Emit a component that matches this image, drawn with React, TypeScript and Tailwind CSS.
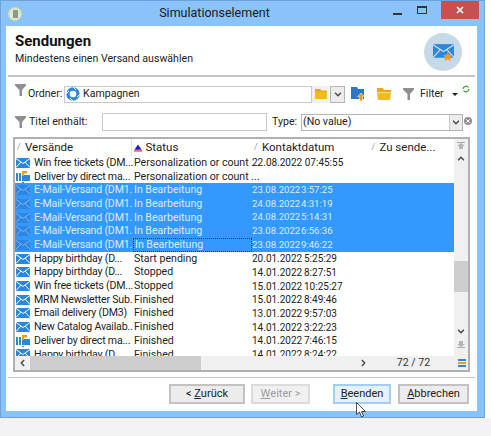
const font = "font-['Roboto',sans-serif]";

function Funnel({ className = "" }: { className?: string }) {
  return (
    <svg viewBox="0 0 11 12" className={"w-[11px] h-[12px] shrink-0 " + className}>
      <path d="M0 0H11V1.5L7 6V12H4.5V6L0 1.5Z" fill="#8f8f8f" />
    </svg>
  );
}

function Mail({ dim = false }: { dim?: boolean }) {
  return (
    <svg viewBox="0 0 14 10" className="w-[14px] h-[10px] shrink-0">
      <rect width="14" height="10" fill={dim ? "#2f86e0" : "#2b86dc"} />
      <path d="M0 0.5L7 5.5L14 0.5M0 9.5L4.8 4.2M14 9.5L9.2 4.2" stroke={dim ? "#76b5f5" : "#ffffff"} strokeWidth="1" fill="none" />
    </svg>
  );
}

function DirectMail() {
  return (
    <svg viewBox="0 0 14 13" className="w-[14px] h-[13px] shrink-0">
      <rect x="0" y="3" width="2" height="8" fill="#2b86dc" />
      <rect x="3" y="3" width="2" height="8" fill="#2b86dc" />
      <rect x="6" y="5" width="8" height="6" fill="#2b86dc" />
      <path d="M6 1H11V3.5H8V6H6Z" fill="#f39a1e" />
      <rect x="6" y="12" width="2" height="1" fill="#2b86dc" />
    </svg>
  );
}

function FolderYellow({ open = false }: { open?: boolean }) {
  return (
    <svg viewBox="0 0 14 12" className="w-[14px] h-[12px] shrink-0">
      <path d="M0 0H6L7 2H14V4H0Z" fill={open ? "#e9a917" : "#e5a914"} />
      <path d={open ? "M0 4.5H14L13 12H1Z" : "M0 3H14V12H0Z"} fill="#f3bb15" />
    </svg>
  );
}

function Chevron({ up = false }: { up?: boolean }) {
  return (
    <svg viewBox="0 0 9 6" className="w-[8px] h-[5px] shrink-0">
      <path d={up ? "M1 5L4.5 1.5L8 5" : "M1 1L4.5 4.5L8 1"} stroke="#444" strokeWidth="1.6" fill="none" />
    </svg>
  );
}

function DoubleArrow({ down = false }: { down?: boolean }) {
  return (
    <svg viewBox="0 0 8 7" className={"w-[8px] h-[7px] " + (down ? "rotate-180" : "")}>
      <rect width="8" height="1" fill="#a8a8a8" />
      <path d="M4 1L8 4H6V7H2V4H0Z" fill="#b4b4b4" />
    </svg>
  );
}

type Row = { icon: "mail" | "direct"; name: string; status: string; date?: string; time?: string; sel?: boolean; focus?: boolean };

const rows: Row[] = [
  { icon: "mail", name: "Win free tickets (DM...", status: "Personalization or count ...", date: "22.08.2022 07:45:55" },
  { icon: "direct", name: "Deliver by direct ma...", status: "Personalization or count ..." },
  { icon: "mail", name: "E-Mail-Versand (DM1.", status: "In Bearbeitung", date: "23.08.2022", time: "3:57:25", sel: true },
  { icon: "mail", name: "E-Mail-Versand (DM1.", status: "In Bearbeitung", date: "24.08.2022", time: "4:31:19", sel: true },
  { icon: "mail", name: "E-Mail-Versand (DM1.", status: "In Bearbeitung", date: "24.08.2022", time: "5:14:31", sel: true },
  { icon: "mail", name: "E-Mail-Versand (DM1.", status: "In Bearbeitung", date: "23.08.2022", time: "6:56:36", sel: true },
  { icon: "mail", name: "E-Mail-Versand (DM1.", status: "In Bearbeitung", date: "23.08.2022", time: "9:46:22", sel: true, focus: true },
  { icon: "mail", name: "Happy birthday (D...", status: "Start pending", date: "20.01.2022", time: "5:25:29" },
  { icon: "mail", name: "Happy birthday (D...", status: "Stopped", date: "14.01.2022", time: "8:27:51" },
  { icon: "mail", name: "Win free tickets (DM...", status: "Stopped", date: "15.01.2022", time: "10:25:27" },
  { icon: "mail", name: "MRM Newsletter Sub...", status: "Finished", date: "15.01.2022", time: "8:49:46" },
  { icon: "mail", name: "Email delivery (DM3)", status: "Finished", date: "13.01.2022", time: "9:57:03" },
  { icon: "mail", name: "New Catalog Availab...", status: "Finished", date: "14.01.2022", time: "3:22:23" },
  { icon: "direct", name: "Deliver by direct ma...", status: "Finished", date: "14.01.2022", time: "7:46:15" },
  { icon: "mail", name: "Happy birthday (D...", status: "Finished", date: "14.01.2022", time: "8:24:22" },
];

function TableRow({ row }: { row: Row }) {
  return (
    <div className={"flex items-center h-[13.7px] shrink-0 whitespace-nowrap " + (row.sel ? "bg-[#3399ff] text-[#dcecff]" : "text-[#222]")}>
      <div className="w-[118px] shrink-0 flex items-center gap-[4px] pl-[1px] overflow-hidden">
        {row.icon === "mail" ? <Mail dim={row.sel} /> : <DirectMail />}
        <span className="tracking-[-0.2px]">{row.name}</span>
      </div>
      <div className={"w-[119px] shrink-0 pl-[1px] " + (row.focus ? "border border-dotted border-[#333] h-[13.7px] leading-[11px] pl-[0px]" : "")}>{row.status}</div>
      <div className={"flex-1 flex " + (row.sel ? "text-[9.6px]" : "text-[10px]")}>
        <span className={row.time ? (row.sel ? "w-[49px]" : "w-[52px]") : ""}>{row.date}</span>
        <span>{row.time}</span>
      </div>
    </div>
  );
}

function HeaderCell({ w, label, sort }: { w: string; label: string; sort?: boolean }) {
  return (
    <div className={"flex items-center h-full " + w}>
      {sort ? (
        <svg viewBox="0 0 9 8" className="w-[8px] h-[8px] ml-[2px] mr-[3px]">
          <path d="M4.5 0L8.5 6H0.5Z" fill="#1a1ac8" />
          <rect y="6.5" width="9" height="1.5" fill="#e04040" />
        </svg>
      ) : (
        <span className="text-[#999] text-[9px] w-[10px] pl-[2px]">/</span>
      )}
      <span className="text-[11.5px]">{label}</span>
    </div>
  );
}

function Button({ label, u, rest, w, state }: { label?: string; u: string; rest: string; w: string; state?: "hot" | "off" }) {
  const look =
    state === "hot"
      ? "bg-[#e5f1fb] border-[#a3cdf2] text-[#222]"
      : state === "off"
        ? "bg-[#f0f0f0] border-[#dcdcdc] text-[#9c9c9c]"
        : "bg-[#ececec] border-[#c2c2c2] text-[#222]";
  return (
    <button className={"h-[20px] border-2 flex items-center justify-center text-[11px] whitespace-pre " + w + " " + look}>
      {label}
      <span className="underline">{u}</span>
      {rest}
    </button>
  );
}

export default function App() {
  return (
    <div className={"w-[491px] h-[436px] bg-white text-[10.6px] text-[#222] overflow-hidden " + font}>
      <div className="w-[485px] h-[418px] bg-[#8ac3f9] border border-[#6da3d8] flex flex-col relative">
        {/* title bar */}
        <div className="h-[25px] flex items-center shrink-0">
          <div className="w-[14px] h-[14px] rounded-full bg-[#dfe8c8] border border-[#c8d8a8] ml-[7px] flex items-center justify-center">
            <div className="w-[5px] h-[8px] bg-[#8a9a8a]" />
          </div>
          <div className="flex-1 text-center text-[12.5px] text-[#1a1a1a] pl-[14px]">Simulationselement</div>
          <div className="w-[9px] h-[2px] bg-[#333] mr-[15px] mt-[1px]" />
          <div className="w-[10px] h-[8px] border border-t-2 border-[#333] mr-[14px] -mt-[7px]" />
          <div className="w-[38px] h-[18px] bg-[#c75050] flex items-center justify-center self-start mr-[5px]">
            <svg viewBox="0 0 8 8" className="w-[8px] h-[8px]">
              <path d="M1 1L7 7M7 1L1 7" stroke="#fff" strokeWidth="1.6" />
            </svg>
          </div>
        </div>

        {/* client area */}
        <div className="mx-[5px] w-[471px] h-[385px] bg-white flex flex-col shrink-0">
          <div className="h-[49px] shrink-0 mx-[2px] border-b-2 border-[#c4c4c4] flex justify-between pl-[7px] pr-[13px] box-content">
            <div className="pt-[6px]">
              <div className="text-[15px] font-bold leading-[18px] text-[#111]">Sendungen</div>
              <div className="text-[10.6px] leading-[16px] mt-[1px]">Mindestens einen Versand auswählen</div>
            </div>
            <div className="w-[38px] h-[38px] rounded-full bg-[#c5d9e8] flex items-center justify-center mt-[7px]">
              <svg viewBox="0 0 20 16" className="w-[21px] h-[17px]">
                <rect x="0" y="0" width="20" height="13" fill="#2b86dc" />
                <path d="M0 0.5L10 7L20 0.5M0 13L7 5M20 13L13 5" stroke="#c5d9e8" strokeWidth="1.2" fill="none" />
                <path d="M14 7.5L15.4 10.3L18.5 10.7L16.2 12.8L16.8 16L14 14.4L11.2 16L11.8 12.8L9.5 10.7L12.6 10.3Z" fill="#f39a1e" />
              </svg>
            </div>
          </div>

          {/* folder row */}
          <div className="flex items-center h-[18px] mt-[8px] ml-[9px] shrink-0">
            <Funnel className="-mt-[8px]" />
            <span className="w-[37px] ml-[1px] pl-[1px] shrink-0">Ordner:</span>
            <div className="w-[248px] h-[17px] border border-[#c8c8c8] flex items-center pl-[1px] shrink-0">
              <svg viewBox="0 0 14 14" className="w-[14px] h-[14px]">
                <circle cx="7" cy="7" r="5" fill="none" stroke="#2b86dc" strokeWidth="3.4" />
                <path d="M7 0L10 3M7 14L4 11M0 7L3 4M14 7L11 10" stroke="#fff" strokeWidth="1" />
              </svg>
              <span className="ml-[3px]">Kampagnen</span>
            </div>
            <div className="w-[17px] h-[17px] bg-[#f1f1f1] flex items-center justify-center shrink-0">
              <div className="scale-[0.85]"><FolderYellow /></div>
            </div>
            <div className="w-[15px] h-[17px] ml-[1px] bg-[#ececec] border border-[#b4b4b4] flex items-center justify-center shrink-0"><Chevron /></div>
            <svg viewBox="0 0 14 14" className="w-[14px] h-[14px] ml-[6px] shrink-0">
              <path d="M0 0H6L7 2H13V12H0Z" fill="#2b76c8" />
              <path d="M10 6L13.5 9.5H11.5V14H8.5V9.5H6.5Z" fill="#f39a1e" stroke="#fff" strokeWidth="0.5" />
            </svg>
            <div className="ml-[12px]"><FolderYellow open /></div>
            <Funnel className="ml-[12px]" />
            <span className="ml-[6px] w-[24px] text-[#222]">Filter</span>
            <svg viewBox="0 0 6 3" className="w-[6px] h-[3px] ml-[8px]"><path d="M0 0H6L3 3Z" fill="#222" /></svg>
            <svg viewBox="0 0 8 8" className="w-[8px] h-[8px] ml-[4px] -mt-[10px]">
              <path d="M1 4A3 3 0 0 1 6.5 2.5M7 4A3 3 0 0 1 1.5 5.5" stroke="#3aa63a" strokeWidth="1.3" fill="none" />
            </svg>
          </div>

          {/* title filter row */}
          <div className="flex items-center h-[18px] mt-[10px] ml-[9px] shrink-0">
            <Funnel />
            <span className="w-[73px] ml-[3px] shrink-0">Titel enthält:</span>
            <div className="w-[165px] h-[18px] border border-[#c8c8c8] shrink-0" />
            <span className="w-[29px] ml-[5px] shrink-0">Type:</span>
            <div className="w-[162px] h-[17px] border border-[#b4b4b4] flex items-center justify-between pl-[1px] shrink-0">
              <span>(No value)</span>
              <div className="w-[13px] h-full bg-[#ececec] border-l border-[#c8c8c8] flex items-center justify-center"><Chevron /></div>
            </div>
            <svg viewBox="0 0 8 8" className="w-[8px] h-[8px] ml-[1px] -mt-[3px]">
              <circle cx="4" cy="4" r="4" fill="#8f8f8f" />
              <path d="M2.3 2.3L5.7 5.7M5.7 2.3L2.3 5.7" stroke="#fff" strokeWidth="1" />
            </svg>
          </div>

          {/* table */}
          <div className="mt-[6px] ml-[7px] w-[457px] h-[235px] border-2 border-[#b0b0b0] flex flex-col shrink-0 overflow-hidden">
            <div className="flex flex-1 min-h-0">
              <div className="w-[441px] flex flex-col overflow-hidden">
                <div className="h-[17px] flex shrink-0 items-center text-[#222]">
                  <HeaderCell w="w-[118px] border-r border-[#e2e2e2]" label="Versände" />
                  <HeaderCell w="w-[120px]" label="Status" sort />
                  <HeaderCell w="w-[118px]" label="Kontaktdatum" />
                  <HeaderCell w="w-[85px]" label="Zu sende..." />
                </div>
                {rows.map((r, i) => (
                  <TableRow key={i} row={r} />
                ))}
              </div>
              {/* vertical scrollbar */}
              <div className="w-[14px] bg-[#f0f0f0] flex flex-col items-center shrink-0">
                <div className="mt-[3px]"><DoubleArrow /></div>
                <div className="mt-[7px]"><Chevron up /></div>
                <div className="w-full h-[31px] bg-[#cdcdcd] mt-[100px]" />
                <div className="mt-[37px]"><Chevron /></div>
                <div className="mt-[7px]"><DoubleArrow down /></div>
              </div>
            </div>
            {/* horizontal scrollbar + counter */}
            <div className="h-[14px] flex items-center shrink-0 bg-[#f0f0f0]">
              <div className="w-[15px] flex justify-center"><svg viewBox="0 0 6 9" className="w-[5px] h-[8px]"><path d="M5 1L1.5 4.5L5 8" stroke="#444" strokeWidth="1.6" fill="none" /></svg></div>
              <div className="w-[171px] h-full bg-[#cdcdcd]" />
              <div className="w-[155px]" />
              <div className="w-[15px] flex justify-center"><svg viewBox="0 0 6 9" className="w-[5px] h-[8px]"><path d="M1 1L4.5 4.5L1 8" stroke="#444" strokeWidth="1.6" fill="none" /></svg></div>
              <div className="w-[85px] text-center text-[#333]">72 / 72</div>
              <div className="flex-1 flex flex-col gap-[1px] items-center">
                <div className="w-[8px] h-[2px] bg-[#2b86dc]" />
                <div className="w-[8px] h-[2px] bg-[#f39a1e]" />
                <div className="w-[8px] h-[2px] bg-[#2b86dc]" />
              </div>
            </div>
          </div>

          <div className="mx-[2px] mt-[5px] h-[1px] border-b border-[#c4c4c4] shrink-0" />

          {/* buttons */}
          <div className="flex mt-[6px] shrink-0 pl-[163px]">
            <Button u="Z" rest="urück" label="< " w="w-[76px]" />
            <Button u="W" rest="eiter >" w="w-[59px] ml-[6px]" state="off" />
            <Button u="B" rest="eenden" w="w-[58px] ml-[23px]" state="hot" />
            <Button u="A" rest="bbrechen" w="w-[71px] ml-[7px]" />
          </div>
        </div>

        {/* mouse pointer over the button */}
        <svg viewBox="0 0 11 16" className="absolute left-[355px] top-[401px] w-[11px] h-[16px]">
          <path d="M0.5 0.5V12.5L3.5 10L5.5 15L7.5 14L5.5 9.5H9.5Z" fill="#fff" stroke="#222" strokeWidth="0.8" />
        </svg>
      </div>
      <div className="h-[18px] bg-[#f3f3f3]" />
    </div>
  );
}
